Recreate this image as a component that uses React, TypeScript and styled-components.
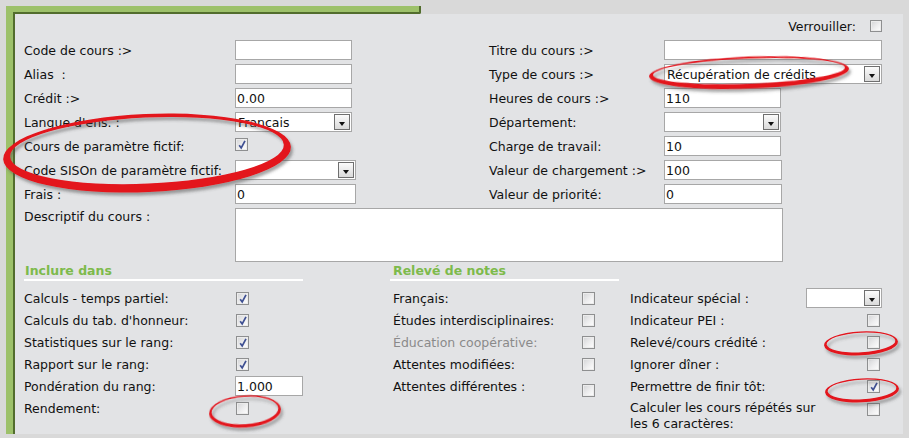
import styled, { createGlobalStyle } from "styled-components";

const GlobalStyle = createGlobalStyle`
  html, body {
    margin: 0;
    padding: 0;
  }
  body {
    background: #d9d9d9;
    font-family: "DejaVu Sans", Verdana, sans-serif;
    font-size: 12.5px;
    color: #111;
  }
`;

const Page = styled.div`
  position: relative;
  width: 909px;
  height: 438px;
  padding: 6px 6px 4px 6px;
  box-sizing: border-box;
  display: flex;
`;

const Frame = styled.div`
  flex: 1;
  display: flex;
`;

const SideBar = styled.div`
  width: 9px;
  flex-shrink: 0;
  background: linear-gradient(#9dc16a, #9dc16a) 0 0 / 100% 6px no-repeat,
    linear-gradient(to right, #9dc16a 7px, #526d2d 7px);
`;

const Main = styled.div`
  flex: 1;
  display: flex;
  flex-direction: column;
`;

const TopBar = styled.div`
  width: 404px;
  height: 6px;
  flex-shrink: 0;
  background: #9dc16a;
  border-bottom: 2px solid #526d2d;
  border-right: 2px solid #526d2d;
  border-bottom-right-radius: 2px;
`;

const Content = styled.div`
  flex: 1;
  background: #e2e3e5;
  padding: 0 21px 0 9px;
`;

const LockRow = styled.div`
  height: 24px;
  display: flex;
  align-items: center;
  justify-content: flex-end;
  gap: 14px;
`;

const FormGrid = styled.div`
  display: grid;
  grid-template-columns: 211px 254px 175px 1fr;
  grid-template-rows: repeat(7, 24px) auto;
  align-items: center;
`;

const Label = styled.div<{ $muted?: boolean }>`
  white-space: pre;
  color: ${(p) => (p.$muted ? "#8a8a8a" : "#111")};
`;

const TopLabel = styled(Label)`
  align-self: start;
  padding-top: 3px;
`;

const TextInput = styled.input<{ $w: number }>`
  width: ${(p) => p.$w}px;
  height: 20px;
  box-sizing: border-box;
  border: 1px solid #a7a7a7;
  background: #fff;
  padding: 0 1px;
  margin: 0;
  font-family: "DejaVu Sans", Verdana, sans-serif;
  font-size: 12.5px;
  color: #111;
  outline: none;
`;

const TextArea = styled.textarea`
  grid-column: 2 / span 3;
  width: 548px;
  height: 54px;
  box-sizing: border-box;
  margin: 2px 0 0 0;
  border: 1px solid #a7a7a7;
  background: #fff;
  resize: none;
  outline: none;
  align-self: start;
`;

const SelectBox = styled.div<{ $w: number }>`
  width: ${(p) => p.$w}px;
  height: 20px;
  box-sizing: border-box;
  border: 1px solid #a7a7a7;
  background: #fff;
  display: flex;
  align-items: center;
  padding: 0 1px 0 2px;
`;

const SelectText = styled.span`
  flex: 1;
  white-space: nowrap;
  overflow: hidden;
`;

const ArrowButton = styled.span`
  width: 16px;
  height: 16px;
  box-sizing: border-box;
  border: 1px solid #6f6f6f;
  background: linear-gradient(#fbfbfb, #dadada);
  display: flex;
  align-items: center;
  justify-content: center;
  &::after {
    content: "";
    margin-top: 3px;
    border-left: 3.5px solid transparent;
    border-right: 3.5px solid transparent;
    border-top: 4px solid #111;
  }
`;

const Box = styled.span<{ $low?: boolean; $size?: number }>`
  position: relative;
  display: inline-block;
  width: ${(p) => p.$size ?? 13}px;
  height: ${(p) => p.$size ?? 13}px;
  box-sizing: border-box;
  border: 1px solid #8e8f90;
  background: linear-gradient(135deg, #d3d4d6 0%, #eeeeef 55%, #ffffff 100%);
  box-shadow: inset 0 0 0 1px #ececec;
  margin-top: ${(p) => (p.$low ? 9 : 0)}px;
  svg {
    position: absolute;
    left: 1px;
    top: 0px;
  }
`;

const Lower = styled.div`
  display: flex;
`;

const Column = styled.div<{ $w: number; $ml?: number }>`
  width: ${(p) => p.$w}px;
  margin-left: ${(p) => p.$ml ?? 0}px;
  display: flex;
  flex-direction: column;
`;

const SectionTitle = styled.div<{ $pl?: number }>`
  padding: 1px 0 0 ${(p) => p.$pl ?? 1}px;
  line-height: 16px;
  font-weight: bold;
  color: #7dba4b;
  border-bottom: 2px solid #ffffff;
  margin-bottom: 6px;
`;

const TitleSpacer = styled.div`
  height: 25px;
`;

const ListRow = styled.div<{ $label: number; $pl?: number }>`
  height: 22px;
  display: grid;
  grid-template-columns: ${(p) => p.$label}px 1fr;
  align-items: center;
  padding-left: ${(p) => p.$pl ?? 0}px;
  & > span {
    margin-left: 1px;
  }
`;

const SideRow = styled.div`
  height: 22px;
  display: flex;
  align-items: center;
  justify-content: space-between;
  & > span {
    margin-right: 2px;
  }
`;

const TallRow = styled.div`
  display: flex;
  align-items: flex-start;
  justify-content: space-between;
  & > span {
    margin-right: 2px;
    margin-top: 6px;
  }
`;

const WrapLabel = styled.div`
  width: 196px;
  padding-top: 3px;
  line-height: 16px;
`;

const Marks = styled.svg`
  position: absolute;
  left: 0;
  top: 0;
  pointer-events: none;
`;

function Check({ on, low, size }: { on?: boolean; low?: boolean; size?: number }) {
  return (
    <Box $low={low} $size={size}>
      {on && (
        <svg width="10" height="11" viewBox="0 0 10 11">
          <path d="M2.2 6.2 L4.2 9 L8 1.8" fill="none" stroke="#3e4f92" strokeWidth="1.7" />
        </svg>
      )}
    </Box>
  );
}

function Select({ w, value }: { w: number; value?: string }) {
  return (
    <SelectBox $w={w}>
      <SelectText>{value}</SelectText>
      <ArrowButton />
    </SelectBox>
  );
}

// ring drawn as the band between two ellipses, thicker towards the bottom
function ring(cx: number, cy: number, rx: number, ry: number, t: number, rot: number) {
  const o = `M${cx - rx},${cy + t * 0.15} a${rx},${ry} 0 1,0 ${2 * rx},0 a${rx},${ry} 0 1,0 ${-2 * rx},0 Z`;
  const irx = rx - t;
  const iry = ry - t * 0.85;
  const icy = cy - t * 0.2;
  const i = `M${cx - irx},${icy} a${irx},${iry} 0 1,0 ${2 * irx},0 a${irx},${iry} 0 1,0 ${-2 * irx},0 Z`;
  return <path d={o + i} fillRule="evenodd" transform={`rotate(${rot} ${cx} ${cy})`} />;
}

export default function App() {
  return (
    <Page>
      <GlobalStyle />
      <Frame>
        <SideBar />
        <Main>
          <TopBar />
          <Content>
            <LockRow>
              <Label>Verrouiller:</Label>
              <Check size={12} />
            </LockRow>
            <FormGrid>
              <Label>Code de cours :&gt;</Label>
              <TextInput $w={117} defaultValue="" />
              <Label>Titre du cours :&gt;</Label>
              <TextInput $w={218} defaultValue="" />

              <Label>Alias  :</Label>
              <TextInput $w={117} defaultValue="" />
              <Label>Type de cours :&gt;</Label>
              <Select w={218} value="Récupération de crédits" />

              <Label>Crédit :&gt;</Label>
              <TextInput $w={117} defaultValue="0.00" />
              <Label>Heures de cours :&gt;</Label>
              <TextInput $w={117} defaultValue="110" />

              <Label>Langue d'ens. :</Label>
              <Select w={117} value="Francais" />
              <Label>Département:</Label>
              <Select w={117} />

              <Label>Cours de paramètre fictif:</Label>
              <div>
                <Check on />
              </div>
              <Label>Charge de travail:</Label>
              <TextInput $w={117} defaultValue="10" />

              <Label>Code SISOn de paramètre fictif:</Label>
              <Select w={121} />
              <Label>Valeur de chargement :&gt;</Label>
              <TextInput $w={118} defaultValue="100" />

              <Label>Frais :</Label>
              <TextInput $w={121} defaultValue="0" />
              <Label>Valeur de priorité:</Label>
              <TextInput $w={118} defaultValue="0" />

              <TopLabel>Descriptif du cours :</TopLabel>
              <TextArea defaultValue="" />
            </FormGrid>

            <Lower>
              <Column $w={279}>
                <SectionTitle>Inclure dans</SectionTitle>
                <ListRow $label={211}>
                  <Label>Calculs - temps partiel:</Label>
                  <Check on />
                </ListRow>
                <ListRow $label={211}>
                  <Label>Calculs du tab. d'honneur:</Label>
                  <Check on />
                </ListRow>
                <ListRow $label={211}>
                  <Label>Statistiques sur le rang:</Label>
                  <Check on />
                </ListRow>
                <ListRow $label={211}>
                  <Label>Rapport sur le rang:</Label>
                  <Check on />
                </ListRow>
                <ListRow $label={211}>
                  <Label>Pondération du rang:</Label>
                  <TextInput $w={68} defaultValue="1.000" />
                </ListRow>
                <ListRow $label={211}>
                  <Label>Rendement:</Label>
                  <Check />
                </ListRow>
              </Column>

              <Column $w={229} $ml={87}>
                <SectionTitle $pl={3}>Relevé de notes</SectionTitle>
                <ListRow $label={188} $pl={3}>
                  <Label>Français:</Label>
                  <Check />
                </ListRow>
                <ListRow $label={188} $pl={3}>
                  <Label>Études interdisciplinaires:</Label>
                  <Check />
                </ListRow>
                <ListRow $label={188} $pl={3}>
                  <Label $muted>Éducation coopérative:</Label>
                  <Check />
                </ListRow>
                <ListRow $label={188} $pl={3}>
                  <Label>Attentes modifiées:</Label>
                  <Check />
                </ListRow>
                <ListRow $label={188} $pl={3}>
                  <Label>Attentes différentes :</Label>
                  <Check low />
                </ListRow>
              </Column>

              <Column $w={252} $ml={11}>
                <TitleSpacer />
                <SideRow>
                  <Label>Indicateur spécial :</Label>
                  <Select w={76} />
                </SideRow>
                <SideRow>
                  <Label>Indicateur PEI :</Label>
                  <Check />
                </SideRow>
                <SideRow>
                  <Label>Relevé/cours crédité :</Label>
                  <Check />
                </SideRow>
                <SideRow>
                  <Label>Ignorer dîner :</Label>
                  <Check />
                </SideRow>
                <SideRow>
                  <Label>Permettre de finir tôt:</Label>
                  <Check on />
                </SideRow>
                <TallRow>
                  <WrapLabel>Calculer les cours répétés sur les 6 caractères:</WrapLabel>
                  <Check />
                </TallRow>
              </Column>
            </Lower>
          </Content>
        </Main>
      </Frame>

      <Marks width="909" height="438" viewBox="0 0 909 438">
        <defs>
          <filter id="shade" x="-10%" y="-20%" width="120%" height="150%">
            <feDropShadow dx="2" dy="3" stdDeviation="1.6" floodColor="#4a4a4a" floodOpacity="0.5" />
          </filter>
        </defs>
        <g fill="#e3131b" filter="url(#shade)">
          {ring(147, 152, 144, 39, 7, -2.5)}
          {ring(749, 72, 100, 16, 4, -2.2)}
          {ring(245, 411, 36, 16, 2.6, -4)}
          {ring(861, 343, 37, 12, 2.6, -3)}
          {ring(862, 390, 37, 12, 2.6, -3)}
        </g>
      </Marks>
    </Page>
  );
}
